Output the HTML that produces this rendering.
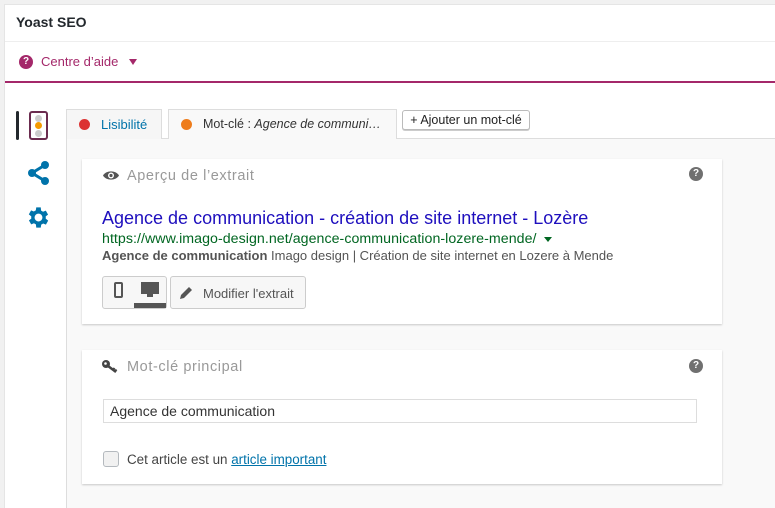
<!DOCTYPE html>
<html><head><meta charset="utf-8"><style>
*{margin:0;padding:0;box-sizing:border-box}
body{width:775px;height:508px;background:#f1f1f1;font-family:"Liberation Sans",sans-serif;position:relative;overflow:hidden}
.box{position:absolute;left:4px;top:4px;right:0;bottom:0;background:#fff;border-left:1px solid #e5e5e5;border-top:1px solid #e5e5e5}
.abs{position:absolute;white-space:nowrap}
.card{position:absolute;left:82px;width:640px;background:#fff;box-shadow:0 1px 2px rgba(0,0,0,.2)}
</style></head><body>
<div class="box"></div>
<div class="abs" style="left:16px;top:14px;font-size:14px;font-weight:bold;color:#23282d">Yoast SEO</div>
<div class="abs" style="left:5px;top:41px;right:0;height:1px;background:#eee"></div>
<div class="abs" style="left:19px;top:55px;width:14px;height:14px;border-radius:50%;background:#a4286a;color:#fff;font-size:10px;font-weight:bold;text-align:center;line-height:14px">?</div>
<div class="abs" style="left:41px;top:54px;font-size:13px;color:#a4286a">Centre d’aide</div>
<div class="abs" style="left:129px;top:59px;border-left:4px solid transparent;border-right:4px solid transparent;border-top:6px solid #a4286a"></div>
<div class="abs" style="left:5px;top:81px;right:0;height:2px;background:#a4286a"></div>
<div class="abs" style="left:16px;top:111px;width:3px;height:29px;background:#23282d;border-radius:2px"></div>
<div class="abs" style="left:29px;top:111px;width:19px;height:29px;border:2px solid #6b2c4f;border-radius:3px"></div>
<div class="abs" style="left:35px;top:115px;width:7px;height:7px;border-radius:50%;background:#ccc"></div>
<div class="abs" style="left:35px;top:122px;width:7px;height:7px;border-radius:50%;background:#f59a00"></div>
<div class="abs" style="left:35px;top:130px;width:7px;height:7px;border-radius:50%;background:#ccc"></div>
<svg class="abs" style="left:26px;top:160px" width="26" height="26" viewBox="0 0 26 26"><g fill="#0073aa"><circle cx="19" cy="5" r="4"/><circle cx="6" cy="13" r="4"/><circle cx="19" cy="21" r="4"/></g><path d="M19 5L6 13L19 21" stroke="#0073aa" stroke-width="3" fill="none"/></svg>
<svg class="abs" style="left:25px;top:204px" width="27" height="27" viewBox="0 0 24 24"><path fill="#0073aa" d="M19.4 13a7.5 7.5 0 000-2l2.1-1.6-2-3.5-2.5 1a7 7 0 00-1.7-1L15 3h-4l-.4 2.7a7 7 0 00-1.7 1l-2.5-1-2 3.5L6.6 11a7.5 7.5 0 000 2l-2.1 1.6 2 3.5 2.5-1a7 7 0 001.7 1L11 21h4l.4-2.7a7 7 0 001.7-1l2.5 1 2-3.5zM13 15.5a3.5 3.5 0 110-7 3.5 3.5 0 010 7z" transform="translate(-1 0)"/></svg>
<div class="abs" style="left:66px;top:138px;right:0;bottom:0;background:#f9f9f9;border-left:1px solid #ddd;border-top:1px solid #ddd"></div>
<div class="abs" style="left:66px;top:109px;width:96px;height:30px;background:#f6f6f6;border:1px solid #ddd;border-bottom:none"></div>
<div class="abs" style="left:79px;top:119px;width:11px;height:11px;border-radius:50%;background:#dc3232"></div>
<div class="abs" style="left:101px;top:117px;font-size:13px;color:#0073aa">Lisibilité</div>
<div class="abs" style="left:168px;top:109px;width:229px;height:30px;background:#f9f9f9;border:1px solid #ddd;border-bottom:none"></div>
<div class="abs" style="left:181px;top:119px;width:11px;height:11px;border-radius:50%;background:#ee7c1b"></div>
<div class="abs" style="left:203px;top:117px;font-size:12.5px;color:#333">Mot-clé : <i>Agence de communi…</i></div>
<div class="abs" style="left:402px;top:110px;width:128px;height:20px;border:1px solid #bbb;border-radius:3px;background:#fff;box-shadow:0 1px 0 #ccc;font-size:12.5px;color:#222;text-align:center;line-height:18px">+ Ajouter un mot-clé</div>
<div class="card" style="top:159px;height:165px"></div>
<svg class="abs" style="left:102px;top:169px" width="18" height="13" viewBox="0 0 18 13"><path d="M1 6.5C4 1 14 1 17 6.5C14 12 4 12 1 6.5Z" fill="#555"/><circle cx="9" cy="6.5" r="3" fill="#fff"/><circle cx="9" cy="6.5" r="1.6" fill="#555"/></svg>
<div class="abs" style="left:127px;top:168px;font-size:14.5px;color:#999;letter-spacing:.6px">Aperçu de l’extrait</div>
<div class="abs" style="left:689px;top:167px;width:14px;height:14px;border-radius:50%;background:#707070;color:#fff;font-size:10px;font-weight:bold;text-align:center;line-height:14px">?</div>
<div class="abs" style="left:102px;top:208px;font-size:18px;color:#1e0fbe">Agence de communication - création de site internet - Lozère</div>
<div class="abs" style="left:102px;top:231px;font-size:14.2px;letter-spacing:.05px;color:#006621">https://www.imago-design.net/agence-communication-lozere-mende/</div>
<div class="abs" style="left:544px;top:237px;border-left:4px solid transparent;border-right:4px solid transparent;border-top:5px solid #006621"></div>
<div class="abs" style="left:102px;top:248px;font-size:13px;color:#545454"><b>Agence de communication</b> Imago design | Création de site internet en Lozere à Mende</div>
<div class="abs" style="left:102px;top:276px;width:65px;height:33px;border:1px solid #ccc;border-radius:3px;background:#f7f7f7"></div>
<div class="abs" style="left:114px;top:282px;width:9px;height:16px;border:2px solid #555;border-radius:2px"></div>
<div class="abs" style="left:141px;top:282px;width:18px;height:12px;background:#555"></div>
<div class="abs" style="left:147px;top:294px;width:6px;height:3px;background:#555"></div>
<div class="abs" style="left:134px;top:303px;width:32px;height:5px;background:#555"></div>
<div class="abs" style="left:170px;top:276px;width:136px;height:33px;border:1px solid #ccc;border-radius:3px;background:#f7f7f7"></div>
<svg class="abs" style="left:179px;top:285px" width="15" height="15" viewBox="0 0 15 15"><path d="M1 14L2 10L10 2L13 5L5 13Z" fill="#555"/></svg>
<div class="abs" style="left:203px;top:286px;font-size:13px;color:#555">Modifier l'extrait</div>
<div class="card" style="top:350px;height:134px"></div>
<svg class="abs" style="left:101px;top:359px" width="18" height="15" viewBox="0 0 18 15"><circle cx="5" cy="5" r="4" fill="#444"/><circle cx="4.5" cy="4.5" r="1.3" fill="#fff"/><path d="M7 7L15 13" stroke="#444" stroke-width="2.5"/><path d="M12 11l1.5-2M14 12.5l1.5-2" stroke="#444" stroke-width="2"/></svg>
<div class="abs" style="left:127px;top:359px;font-size:14.5px;color:#999;letter-spacing:.6px">Mot-clé principal</div>
<div class="abs" style="left:689px;top:359px;width:14px;height:14px;border-radius:50%;background:#707070;color:#fff;font-size:10px;font-weight:bold;text-align:center;line-height:14px">?</div>
<div class="abs" style="left:103px;top:399px;width:594px;height:24px;border:1px solid #ddd;background:#fff;font-size:14px;color:#333;padding:3px 6px">Agence de communication</div>
<div class="abs" style="left:103px;top:451px;width:16px;height:16px;border:1px solid #b4b9be;border-radius:3px;background:#f1f1f1"></div>
<div class="abs" style="left:127px;top:452px;font-size:13.4px;color:#444">Cet article est un <span style="color:#0073aa;text-decoration:underline">article important</span></div>
</body></html>
